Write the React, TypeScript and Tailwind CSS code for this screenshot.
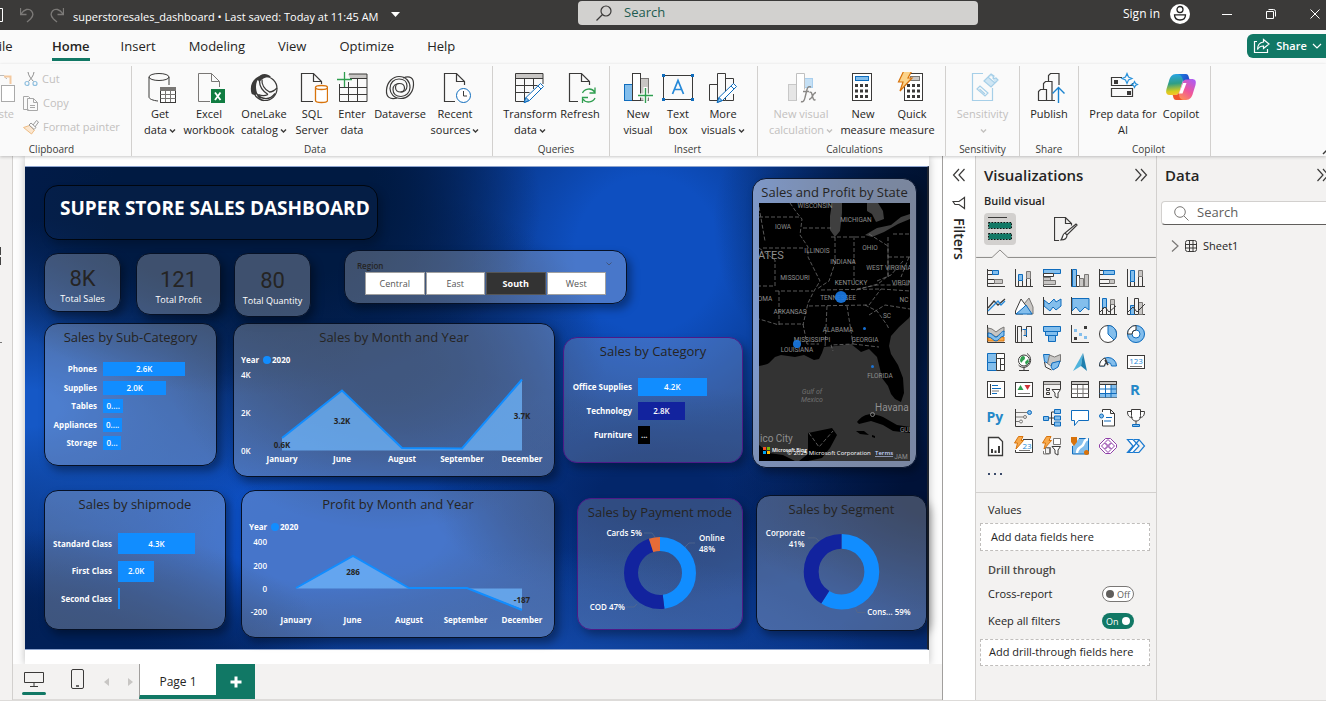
import React from "react";
import type { ReactNode } from "react";

const D = "#3b3a39";
const G = "#797775";
const LG = "#c8c6c4";
const B = "#0f6cbd";
const LB = "#83beec";
const GR = "#2f9e4f";
const OR = "#d8730b";

/* ---------- small helpers ---------- */

function Svg({ w, h, children, className = "" }: { w: number; h: number; children: ReactNode; className?: string }) {
  return (
    <svg width={w} height={h} viewBox={`0 0 ${w} ${h}`} fill="none" className={`shrink-0 ${className}`} aria-hidden="true">
      {children}
    </svg>
  );
}

function Chevron({ color = D }: { color?: string }) {
  return (
    <svg width="7" height="6" viewBox="0 0 7 6" fill="none" className="ml-0.5 inline-block" aria-hidden="true">
      <path d="M1 1.500 3.500 4 6 1.500" stroke={color} strokeWidth="1.400" />
    </svg>
  );
}

/* ---------- ribbon icons (32 x 32) ---------- */

const calcDots = [13, 18.500, 24].flatMap((y) => [8, 13, 18].map((x) => ({ x, y })));

function Pencil() {
  return (
    <g stroke={B}>
      <path d="m26.500 11.500 3 3-14 14-5 2 1.500-5z" fill="#fff" />
      <path d="m12 25.500 3 3-5 2z" fill={LB} />
      <path d="m24 14 3 3" />
    </g>
  );
}

const ribbonIcons: Record<string, ReactNode> = {
  getData: (
    <>
      <g stroke={D}>
        <ellipse cx="15" cy="5" rx="10" ry="3.500" />
        <path d="M5 5v20c0 2 4 3.500 9 4M25 5v8" />
        <rect x="16.500" y="15.500" width="15" height="15" fill="#fff" />
        <path d="M16.500 22.500h15M16.500 26.500h15M21.500 18v12M26.500 18v12" stroke={G} />
      </g>
      <path d="M16 15h16v4H16z" fill={G} />
    </>
  ),
  excel: (
    <>
      <path d="M17 29.500H5.500V1.500H18.500L26.500 9.500V15M18.500 1.500V9.500H26.500" stroke={G} />
      <rect x="18" y="17" width="14" height="14" fill="#107c41" />
      <path d="m22 20.500 5.500 7.500M27.500 20.500 22 28" stroke="#fff" strokeWidth="1.800" />
    </>
  ),
  oneLake: (
    <>
      <circle cx="17" cy="16.500" r="12" stroke={D} strokeWidth="1.200" />
      <path d="M10.500 4.500C4 8 1.500 14 3.500 21.500c2 2 4 1.500 6 .5C7 16 7.500 9 12 5z" fill={D} />
      <path d="M9 7C12 2 18 0 23 5c-4-.5-9 1-11.500 5z" fill={D} />
      <path d="M11.500 9c0 5 3 10 8.500 13.500M14 7.500c-.5 5 2.500 10 7.500 12.500 3 0 5.500-2 7.500-4M9 22c5 6 13 6.500 18-.5M9.500 23.500c1.500 2.500 3.500 4.500 6 5M20 22.500c-3 1.500-6.500 1.500-9.500 0" stroke={D} strokeWidth="1.300" />
    </>
  ),
  sql: (
    <>
      <path d="M17 29.500H5.500V1.500H17.500L25.500 9.500V12M17.500 1.500V9.500H25.500" stroke={D} strokeWidth="1.200" />
      <g stroke={OR} strokeWidth="1.300" fill="#fff">
        <path d="M19.500 15.500v13c0 1.200 3 2 6 2s6-.8 6-2v-13" />
        <ellipse cx="25.500" cy="15.500" rx="6" ry="2" />
      </g>
    </>
  ),
  enter: (
    <>
      <path d="M12 2h19v4H14z" fill={LG} />
      <path d="M3.500 12v17.500h27.500v-27.500H13M3.500 15.500h27.500M3.500 22.500h27.500M12.500 10v19M21.500 6v23M14 6.500h17" stroke={D} />
      <path d="M8.500 0v15M1 7.500h15" stroke={GR} strokeWidth="1.300" />
    </>
  ),
  dataverse: (
    <g stroke={D} strokeWidth="1.200">
      <path d="M13 26C6 28 2 25 2.500 18 3 10 9 4.500 15 4.500c7 0 11 5 11 11 0 5-4 9-9 9s-8-3-8-7c0-4 3-6 6.500-6 3 0 5 2 5 4.500s-2 4-4 4" />
      <path d="M19 6c7-3 11 0 10.500 7-.5 8-6 13.500-12.500 13.500-7 0-11-5-11-10 0-6 4-9.500 9-9.500s8 3 8 7c0 4-3 6-6.500 6-3 0-5-2-5-4.500s2-4 4-4" />
    </g>
  ),
  recent: (
    <>
      <path d="M16 29.500H5.500V1.500H17.500L25.500 9.500V13M17.500 1.500V9.500H25.500" stroke={D} strokeWidth="1.200" />
      <circle cx="24.500" cy="23.500" r="7" stroke={B} fill="#fff" />
      <path d="M24.500 19v5H28" stroke={D} />
    </>
  ),
  transform: (
    <>
      <path d="M2 2h27v4H2z" fill={LG} />
      <path d="M12 29.500H1.500V1.500h27.500V12M1.500 6.500h27.500M1.500 13.500h22M1.500 20.500h14M10.500 6v23M19.500 6v11" stroke={D} />
      <Pencil />
    </>
  ),
  refresh: (
    <>
      <path d="M14 29.500H5.500V1.500H17.500L25.500 9.500V13M17.500 1.500V9.500H25.500" stroke={D} strokeWidth="1.200" />
      <path d="M18.500 21c1.500-4 9-6 12-1M31 15.500V21h-5.500M31 26c-1.500 4-9 6-12 1M18.500 31v-5.500H24" stroke={GR} strokeWidth="1.300" />
    </>
  ),
  newVisual: (
    <>
      <rect x="2.500" y="12.500" width="8" height="16" fill={LB} stroke={B} />
      <rect x="18.500" y="6.500" width="8" height="22" fill={LG} stroke={G} />
      <rect x="10.500" y="1.500" width="8" height="27" fill="#fff" stroke={D} />
      <path d="M23.500 15v16M16 23.500h15" stroke="#fff" strokeWidth="4" />
      <path d="M23.500 16v15M16 23.500h15" stroke={GR} strokeWidth="1.400" />
    </>
  ),
  textBox: (
    <>
      <rect x="1.500" y="3.500" width="29" height="24" stroke={D} />
      <path d="M0 2h3v3H0zM29 2h3v3h-3zM0 26h3v3H0zM29 26h3v3h-3z" fill={B} />
      <path d="M10.500 22 16 8.500 21.500 22M12.500 17.500h7" stroke="#2488d8" strokeWidth="1.700" />
    </>
  ),
  moreVisuals: (
    <>
      <path d="M10.500 12.500h-8v16h8M10.500 28.500v-27h8v27zM18.500 6.500h8V12M18.500 28.500h8V22" stroke={D} />
      <Pencil />
    </>
  ),
  visualCalc: (
    <>
      <rect x="3.500" y="12.500" width="8" height="16" fill="#e6e6e6" stroke="#c8c8c8" />
      <rect x="19.500" y="6.500" width="8" height="9" fill="#c5e0f5" stroke="#a9cfee" />
      <path d="M11.500 28.500v-27h8v16" stroke="#c0c0c0" fill="#fff" />
      <path d="M16 29.500c2 1 3.500-1 4-4l2-8c.6-2.500 2-3.500 4-2.500M18 19.500h6M24.500 20.500c2-1 2 0 3 4s2 4 3 3M31 20.500c-3 0-4 7-7 7" stroke="#8a8886" strokeWidth="1.400" />
    </>
  ),
  newMeasure: (
    <>
      <rect x="5.500" y="1.500" width="19" height="27" stroke={D} fill="#fff" />
      <rect x="8.500" y="4.500" width="13" height="4" fill={LB} stroke={B} />
      {calcDots.map((p) => (
        <rect key={`${p.x}-${p.y}`} x={p.x} y={p.y - 1} width="3" height="3" fill={D} />
      ))}
    </>
  ),
  quickMeasure: (
    <>
      <rect x="8.500" y="1.500" width="18" height="27" stroke={D} fill="#fff" />
      <rect x="14.500" y="4.500" width="9" height="4" fill={LG} stroke={G} />
      {calcDots.map((p) => (
        <rect key={`${p.x}-${p.y}`} x={p.x + 3} y={p.y - 1} width="3" height="3" fill={D} />
      ))}
      <path d="M7.500-.5h8L12 6h4L4 19l3-9H2.500z" fill="#fbd38a" stroke={OR} strokeWidth="1.200" />
    </>
  ),
  sensitivity: (
    <g stroke="#a6cfe8" strokeWidth="1.200">
      <path d="M16 1.500H5.500v27h20V16" />
      <path d="m10 17 3-3 8 7-3 3zM12.500 17l5.500 5" />
      <path d="m17 9 4-4 7 6-4 4zM21 5l3-3 2 2M24 2l3 2-1 3M28 11l3-3-2-2-3 1" fill="#cfe6f4" />
    </g>
  ),
  publish: (
    <>
      <path d="M5.500 28.500v-9l2-2h6v11zM10.500 17v-5.500l2-2h6.500v19h-5.500M15.500 9V3.500l2-2h8.500V13M19 28.500h3" stroke={D} strokeWidth="1.200" />
      <path d="M25.500 31V16M19.500 21.500l6-6 6 6" stroke="#1a83cf" strokeWidth="1.400" />
    </>
  ),
  prep: (
    <>
      <path d="M15 5.500H4.500v8h21V11M4.500 16.500h21v8h-21z" stroke={D} strokeWidth="1.200" />
      <path d="M7 8h4v4H7zM20 19h4v4h-4z" fill={D} />
      <path d="M20 1.500 21.500 5l3.500 1.500L21.500 8 20 11.500 18.500 8 15 6.500 18.500 5zM27.500 9.500l1 2 2 1-2 1-1 2-1-2-2-1 2-1z" stroke="#2a93dc" strokeWidth="1.200" />
    </>
  ),
  copilot: (
    <>
      <defs>
        <linearGradient id="cpA" x1="4" y1="2" x2="6" y2="24" gradientUnits="userSpaceOnUse">
          <stop stopColor="#2aa6ea" />
          <stop offset=".45" stopColor="#2e9e86" />
          <stop offset=".8" stopColor="#d6cc1e" />
          <stop offset="1" stopColor="#ffc02e" />
        </linearGradient>
        <linearGradient id="cpB" x1="28" y1="8" x2="14" y2="28" gradientUnits="userSpaceOnUse">
          <stop stopColor="#b05cf0" />
          <stop offset=".5" stopColor="#f0569a" />
          <stop offset="1" stopColor="#ff9a4a" />
        </linearGradient>
        <linearGradient id="cpC" x1="12" y1="2" x2="24" y2="8" gradientUnits="userSpaceOnUse">
          <stop stopColor="#1b8be6" />
          <stop offset="1" stopColor="#2148c8" />
        </linearGradient>
      </defs>
      <path d="M20 2h-9C7 2 5 5 4 9L1.500 17c-1 4 0 6 4 6H10c3 0 4-2 5-5l3-10c1-4 1-5.500 2-6z" fill="url(#cpA)" />
      <path d="M12 28h9c4 0 6-3 7-7l2.500-8c1-4 0-6-4-6H22c-3 0-4 2-5 5l-3 10c-1 4-1 5.500-2 6z" fill="url(#cpB)" />
      <path d="M12 2h8c3 0 3.500 1.500 4 4l.5 1.500H22c-2.500 0-4 1.500-5 4L18 8c-1-4-3-6-6-6z" fill="url(#cpC)" />
      <path d="M20 28h-8c-3 0-3.500-1.500-4-4l-.3-1H10c3 0 4-2 5-5l-1 4c0 4 2 6 6 6z" fill="#f0542e" />
      <path d="M18 11h3.500l-4 10.500H14z" fill="#fff" />
    </>
  ),
};

interface RibbonItem {
  icon: string;
  lines: string[];
  width: string;
  chevron?: boolean;
  disabled?: boolean;
}
interface RibbonGroup {
  name: string;
  width: string;
  items: RibbonItem[];
}

const ribbonGroups: RibbonGroup[] = [
  {
    name: "Data",
    width: "w-[361px] pl-1.5",
    items: [
      { icon: "getData", lines: ["Get", "data"], width: "w-[44px]", chevron: true },
      { icon: "excel", lines: ["Excel", "workbook"], width: "w-[54px]" },
      { icon: "oneLake", lines: ["OneLake", "catalog"], width: "w-[56px]", chevron: true },
      { icon: "sql", lines: ["SQL", "Server"], width: "w-[40px]" },
      { icon: "enter", lines: ["Enter", "data"], width: "w-[40px]" },
      { icon: "dataverse", lines: ["Dataverse"], width: "w-[56px]" },
      { icon: "recent", lines: ["Recent", "sources"], width: "w-[54px]", chevron: true },
    ],
  },
  {
    name: "Queries",
    width: "w-[117px] pl-2.5",
    items: [
      { icon: "transform", lines: ["Transform", "data"], width: "w-[54px]", chevron: true },
      { icon: "refresh", lines: ["Refresh"], width: "w-[46px]" },
    ],
  },
  {
    name: "Insert",
    width: "w-[148px] pl-2",
    items: [
      { icon: "newVisual", lines: ["New", "visual"], width: "w-[40px]" },
      { icon: "textBox", lines: ["Text", "box"], width: "w-[40px]" },
      { icon: "moreVisuals", lines: ["More", "visuals"], width: "w-[50px]", chevron: true },
    ],
  },
  {
    name: "Calculations",
    width: "w-[188px] pl-1.5",
    items: [
      { icon: "visualCalc", lines: ["New visual", "calculation"], width: "w-[74px]", chevron: true, disabled: true },
      { icon: "newMeasure", lines: ["New", "measure"], width: "w-[50px]" },
      { icon: "quickMeasure", lines: ["Quick", "measure"], width: "w-[48px]" },
    ],
  },
  {
    name: "Sensitivity",
    width: "w-[74px]",
    items: [{ icon: "sensitivity", lines: ["Sensitivity", ""], width: "w-full", chevron: true, disabled: true }],
  },
  { name: "Share", width: "w-[59px]", items: [{ icon: "publish", lines: ["Publish"], width: "w-full" }] },
  {
    name: "Copilot",
    width: "w-[132px] pl-2",
    items: [
      { icon: "prep", lines: ["Prep data for", "AI"], width: "w-[72px]" },
      { icon: "copilot", lines: ["Copilot"], width: "w-[44px]" },
    ],
  },
];

function TitleBar() {
  return (
    <header className="flex h-[30px] items-center bg-[#3b3a39] text-[12px] text-white">
      <div className="flex w-[73px] shrink-0 items-center overflow-hidden">
        <Svg w={4} h={16}>
          <path d="M0 1.500h2.500v13H0" stroke="#fff" />
        </Svg>
        <button type="button" aria-label="Undo" className="ml-4">
          <Svg w={14} h={16}>
            <path d="M.5 1v6.500h6M1 7C4 2 9 1 11.500 4s1 6-1 8L7 15" stroke="#7c7a78" strokeWidth="1.300" />
          </Svg>
        </button>
        <button type="button" aria-label="Redo" className="ml-4">
          <Svg w={14} h={16}>
            <path d="M13.500 1v6.500h-6M13 7C10 2 5 1 2.500 4s-1 6 1 8L7 15" stroke="#7c7a78" strokeWidth="1.300" />
          </Svg>
        </button>
      </div>
      <button type="button" className="flex w-[505px] shrink-0 items-center gap-3 pt-1 text-[11px] whitespace-nowrap">
        <span>superstoresales_dashboard • Last saved: Today at 11:45 AM</span>
        <Svg w={9} h={8} className="mb-1">
          <path d="M0 1h9L4.500 6z" fill="#fff" />
        </Svg>
      </button>
      <label className="mt-px flex h-6 w-[400px] shrink items-center gap-3 self-start rounded-sm bg-[#d2d1cf] pl-4.5">
        <Svg w={16} h={16}>
          <circle cx="10" cy="6" r="5" stroke={D} strokeWidth="1.200" />
          <path d="m6.500 9.500-6 6" stroke={D} strokeWidth="1.200" />
        </Svg>
        <input
          type="search"
          aria-label="Search the application"
          placeholder="Search"
          className="w-full bg-transparent text-[13px] outline-none placeholder:text-[#1d5c50]"
        />
      </label>
      <div className="ml-auto flex h-7 shrink-0 items-center self-start">
        <button type="button" className="flex items-center gap-2.5">
          Sign in
          <Svg w={20} h={20}>
            <circle cx="10" cy="10" r="10" fill="#fff" />
            <circle cx="10" cy="5.500" r="3" stroke="#222" strokeWidth="1.300" />
            <path d="M4.500 10.800h11c0 3-2 5.200-5.500 5.200s-5.500-2.200-5.500-5.200z" stroke="#222" strokeWidth="1.300" />
          </Svg>
        </button>
        <button type="button" aria-label="Minimize" className="ml-8">
          <Svg w={10} h={10}>
            <path d="M0 5.500h10" stroke="#fff" />
          </Svg>
        </button>
        <button type="button" aria-label="Restore" className="ml-8.5">
          <Svg w={10} h={10}>
            <path d="M.5 2.500h7v7h-7zM2.500.5h5q2 0 2 2v5" stroke="#fff" />
          </Svg>
        </button>
        <button type="button" aria-label="Close" className="mr-1.5 ml-8.5">
          <Svg w={10} h={10}>
            <path d="m.5.5 9 9M9.500.5l-9 9" stroke="#fff" />
          </Svg>
        </button>
      </div>
    </header>
  );
}

function TabBar() {
  const tabs = ["Insert", "Modeling", "View", "Optimize", "Help"];
  return (
    <nav className="flex h-[34px] items-center bg-[#fafafa] text-[13px] text-[#252423]">
      <button type="button" className="-ml-2 w-[22px] shrink-0 text-left">
        File
      </button>
      <button type="button" aria-current="page" className="mt-0.5 ml-[38px] h-[29px] self-start border-b-3 border-[#117865] pt-1 font-semibold">
        Home
      </button>
      <div className="ml-[31px] flex gap-[33px]">
        {tabs.map((t) => (
          <button key={t} type="button">
            {t}
          </button>
        ))}
      </div>
      <button
        type="button"
        className="mt-1 ml-auto flex h-6 w-[79px] items-center justify-between self-start rounded-l-md bg-[#117865] pr-1 pl-1.5 text-[11px] font-semibold text-white"
      >
        <Svg w={18} h={16}>
          <path d="M4 3.500H1.500v11h13V11" stroke="#fff" strokeWidth="1.200" />
          <path d="M10.500 1.500 16 6l-5.500 4.500V8C8 8 6 8.500 4.500 11.500 4.500 7 7 4.500 10.500 4z" stroke="#fff" strokeWidth="1.200" />
        </Svg>
        Share
        <Svg w={10} h={6}>
          <path d="m1 1 4 4 4-4" stroke="#fff" strokeWidth="1.200" />
        </Svg>
      </button>
    </nav>
  );
}

function Clipboard() {
  return (
    <section aria-label="Clipboard" className="flex w-[132px] shrink-0 flex-col border-r border-[#d2d0ce]">
      <div className="flex h-[76px] shrink-0 text-[11px] leading-4 text-[#c2c0be]">
        <button type="button" className="-ml-5 flex w-[42px] shrink-0 flex-col items-end gap-0.5 pt-1.5">
          <Svg w={24} h={32} className="mr-1 self-end">
            <path d="M0 6.500h4l2-3h4l2 3h1" stroke="#bbb" />
            <path d="M10 4.500h6.500V12" stroke="#f3c9a0" strokeWidth="2" />
            <rect x="7.500" y="13.500" width="13" height="16" stroke="#aaa" fill="#fff" />
          </Svg>
          <span className="pr-2">Paste</span>
        </button>
        <div className="flex flex-col pt-px">
          <button type="button" className="flex h-6 items-center gap-1 pl-0.5">
            <Svg w={14} h={16}>
              <path d="M4 1c.5 4 3 6.500 5.500 9.500M10 1c-.5 4-3 6.500-5.500 9.500" stroke="#8f8f8f" />
              <circle cx="3" cy="12.500" r="2" stroke="#8fbfdf" strokeWidth="1.200" />
              <circle cx="11" cy="12.500" r="2" stroke="#8fbfdf" strokeWidth="1.200" />
            </Svg>
            Cut
          </button>
          <button type="button" className="flex h-6 items-center gap-1">
            <Svg w={17} h={16}>
              <path d="M6.500 14.500h-5V1.500h5l2 2M5.500 3.500h6l4 4v8h-10zM11.500 3.500v4h4M8 10.500h5M8 12.500h5" stroke="#a8a8a8" />
            </Svg>
            Copy
          </button>
          <button type="button" className="flex h-6 items-center gap-1 whitespace-nowrap">
            <Svg w={17} h={16}>
              <path d="m1.500 8.500 6-2 5 4.500-3 4z" fill="#fbe6cf" stroke="#eebd85" />
              <path d="m7 6 2-2 5 4.500-2 2zM11 6l3.500-4.500L16.500 3 13 8" stroke="#9a9a9a" />
            </Svg>
            Format painter
          </button>
        </div>
      </div>
      <div className="pr-7 text-center text-[10px] leading-[14px] text-[#3b3a39]">Clipboard</div>
    </section>
  );
}

function Ribbon() {
  return (
    <div className="relative z-10 flex h-[92px] bg-[#fafafa] pt-0.5 shadow-[0_1px_3px_rgba(0,0,0,0.22)]">
      <Clipboard />
      {ribbonGroups.map((g) => (
        <section key={g.name} aria-label={g.name} className={`flex shrink-0 flex-col border-r border-[#d2d0ce] ${g.width}`}>
          <div className="flex h-[76px] shrink-0 items-start">
            {g.items.map((it) => (
              <button
                key={it.icon}
                type="button"
                disabled={it.disabled}
                className={`flex shrink-0 flex-col items-center pt-1.5 text-[11px] leading-4 whitespace-nowrap ${it.width} ${
                  it.disabled ? "text-[#c2c0be]" : "text-[#252423]"
                }`}
              >
                <Svg w={32} h={32} className="mb-0.5">{ribbonIcons[it.icon]}</Svg>
                {it.lines.map((l, i) => (
                  <span key={i} className="block h-4">
                    {l}
                    {it.chevron && i === it.lines.length - 1 && <Chevron color={it.disabled ? "#c2c0be" : D} />}
                  </span>
                ))}
              </button>
            ))}
          </div>
          <div className="text-center text-[10px] leading-[14px] text-[#3b3a39]">{g.name}</div>
        </section>
      ))}
      <button type="button" aria-label="Collapse ribbon" className="ml-auto self-end">
        <Svg w={4} h={8}>
          <path d="m1 6 4-4" stroke={D} strokeWidth="1.500" />
        </Svg>
      </button>
    </div>
  );
}

/* ---------- report visuals ---------- */

function Card({ title, className, children }: { title?: string; className: string; children?: ReactNode }) {
  return (
    <section className={`flex min-w-0 flex-col overflow-hidden rounded-[14px] border ${className}`}>
      {title && (
        <h2 className="pt-1 text-center text-[13px] leading-[18px] font-medium whitespace-nowrap text-[#252423]">{title}</h2>
      )}
      {children}
    </section>
  );
}

const glass = "bg-[#e6e6e6]/27 border-[#061126] shadow-[4px_5px_8px_rgba(0,0,0,0.35)]";
const glassPurple = "bg-[#e6e6e6]/20 border-[#4d1a87] shadow-[4px_5px_8px_rgba(0,0,0,0.3)]";

interface Bar {
  label: string;
  text: string;
  share: number;
  color?: string;
}

function Bars({ rows, labelWidth, barHeight, className }: { rows: Bar[]; labelWidth: string; barHeight: string; className: string }) {
  return (
    <div className={`flex flex-col justify-between ${className}`}>
      {rows.map((r) => (
        <div key={r.label} className="flex items-center">
          <span className={`shrink-0 text-right text-[8px] leading-3 font-bold whitespace-nowrap text-white ${labelWidth}`}>{r.label}</span>
          <div className="ml-1.5 flex min-w-0 flex-1">
            <div
              className={`flex items-center justify-center overflow-hidden text-[8px] font-semibold text-white ${barHeight} ${r.color ?? "bg-[#118dff]"}`}
              style={{ width: `${r.share}%` }}
            >
              {r.text}
            </div>
          </div>
        </div>
      ))}
    </div>
  );
}

function Label({ x, y, children, anchor = "middle", dark = false, heavy = false }: { x: number; y: number; children: string; anchor?: "start" | "middle" | "end"; dark?: boolean; heavy?: boolean }) {
  return (
    <text x={x} y={y} textAnchor={anchor} fontSize="8" fontWeight={heavy ? 700 : 600} fill={dark ? "#252423" : "#fff"}>
      {children}
    </text>
  );
}

function SalesChart() {
  return (
    <svg viewBox="0 0 320 128" className="mt-px w-full" role="img" aria-label="Sales by month">
      <Label x={7} y={16} anchor="start" heavy>Year</Label>
      <circle cx="33" cy="13" r="4" fill="#118dff" />
      <Label x={38} y={16} anchor="start" heavy>2020</Label>
      <Label x={7} y={31} anchor="start">4K</Label>
      <Label x={7} y={69} anchor="start">2K</Label>
      <Label x={7} y={107} anchor="start">0K</Label>
      <path d="M48 91 108 43.500 168 101l60 .5L288 32.500V103.500H48z" fill="#6fb6fb" fillOpacity=".75" />
      <path d="M48 91 108 43.500 168 101l60 .5L288 32.500" fill="none" stroke="#118dff" strokeWidth="2" />
      <Label x={48} y={101} dark heavy>0.6K</Label>
      <Label x={108} y={77} dark heavy>3.2K</Label>
      <Label x={288} y={72} dark heavy>3.7K</Label>
      {["January", "June", "August", "September", "December"].map((m, i) => (
        <Label key={m} x={48 + i * 60} y={115} heavy>{m}</Label>
      ))}
    </svg>
  );
}

function ProfitChart() {
  return (
    <svg viewBox="0 0 312 122" className="mt-px w-full" role="img" aria-label="Profit by month">
      <Label x={7} y={16} anchor="start" heavy>Year</Label>
      <circle cx="33" cy="13" r="4" fill="#118dff" />
      <Label x={38} y={16} anchor="start" heavy>2020</Label>
      <Label x={25} y={31} anchor="end">400</Label>
      <Label x={25} y={55} anchor="end">200</Label>
      <Label x={25} y={78} anchor="end">0</Label>
      <Label x={25} y={101} anchor="end">-200</Label>
      <path d="M54 74.500 111 42l56 32h58l55 21V74.500z" fill="#6fb6fb" fillOpacity=".75" />
      <path d="M54 74 111 42l56 32h58l55 22" fill="none" stroke="#118dff" strokeWidth="2" />
      <Label x={111} y={61} dark heavy>286</Label>
      <Label x={280} y={89} dark heavy>-187</Label>
      {["January", "June", "August", "September", "December"].map((m, i) => (
        <Label key={m} x={54 + i * 56.500} y={109} heavy>{m}</Label>
      ))}
    </svg>
  );
}

function Arc({ cx, cy, r, w, from, to, color }: { cx: number; cy: number; r: number; w: number; from: number; to: number; color: string }) {
  return (
    <circle
      cx={cx}
      cy={cy}
      r={r}
      fill="none"
      stroke={color}
      strokeWidth={w}
      pathLength={100}
      strokeDasharray={`${to - from} ${100 - (to - from)}`}
      strokeDashoffset={-from}
      transform={`rotate(-90 ${cx} ${cy})`}
    />
  );
}

function PaymentDonut() {
  return (
    <svg viewBox="0 0 164 108" className="w-full" role="img" aria-label="Sales by payment mode">
      <Arc cx={82} cy={52} r={29} w={14} from={0} to={48} color="#118dff" />
      <Arc cx={82} cy={52} r={29} w={14} from={48} to={95} color="#12239e" />
      <Arc cx={82} cy={52} r={29} w={14} from={95} to={100} color="#e66c37" />
      <path d="M66 12h8l3 4M107 26l4-4h6M48 86h8l3-3" fill="none" stroke="#566a8c" strokeWidth=".7" />
      <Label x={64} y={15} anchor="end">Cards 5%</Label>
      <Label x={121} y={20} anchor="start">Online</Label>
      <Label x={121} y={31} anchor="start">48%</Label>
      <Label x={47} y={89} anchor="end">COD 47%</Label>
    </svg>
  );
}

function SegmentDonut() {
  return (
    <svg viewBox="0 0 170 112" className="w-full" role="img" aria-label="Sales by segment">
      <Arc cx={85} cy={54} r={30.500} w={15} from={0} to={59} color="#118dff" />
      <Arc cx={85} cy={54} r={30.500} w={15} from={59} to={100} color="#12239e" />
      <path d="M51 20h8l3 3M99 91l2 4h8" fill="none" stroke="#5d6b82" strokeWidth=".7" />
      <Label x={48} y={18} anchor="end">Corporate</Label>
      <Label x={48} y={29} anchor="end">41%</Label>
      <Label x={111} y={98} anchor="start">Cons... 59%</Label>
    </svg>
  );
}

const mapLabels: [number, number, string][] = [
  [56, 5, "WISCONSIN"],
  [24, 26, "IOWA"],
  [97, 19, "MICHIGAN"],
  [58, 50, "ILLINOIS"],
  [111, 47, "OHIO"],
  [84, 61, "INDIANA"],
  [130, 67, "WEST VIRGINIA"],
  [36, 77, "MISSOURI"],
  [92, 82, "KENTUCKY"],
  [143, 82, "VIRGIN"],
  [79, 97, "TENNESSEE"],
  [6, 98, "OMA"],
  [145, 99, "NC"],
  [31, 111, "ARKANSAS"],
  [128, 115, "SC"],
  [79, 129, "ALABAMA"],
  [53, 139, "MISSISSIPPI"],
  [106, 139, "GEORGIA"],
  [38, 149, "LOUISIANA"],
  [121, 175, "FLORIDA"],
  [147, 229, "GUL"],
  [142, 256, "JAM"],
];

function StateMap() {
  return (
    <svg viewBox="0 0 151 258" className="mx-auto w-[151px] bg-black" role="img" aria-label="Map of sales and profit by state">
      <path
        d="M0 163c4-1 7-1 10-3l6-6 6-2 14 2 9-2 10 5 5-1 3-6 2-6 12-1 15-2 10 8 8-3 8 8 3 12 2 9 6 8 3 8 4 5 6 3 3-9-1-15-5-13-7-11-2-8 2-10 8-9 10-9 4-7 7-2V258H0z"
        fill="#333"
      />
      <path d="M98 219c6-8 14-10 26-5l14 8 13 2v6l-17-2-10-6-12-4-12 3zM49 230l24-5 5 7-7 13-8 10-14 3H40l9-7zM0 242l10 8 14 2 12 6H0zM97 228l8 0 5 4-9-1zM113 232l3 1v2l-3-1z" fill="#000" />
      <path d="M73 0h10l0 10-2 18-5 6-5-7 0-14zM108 0h11l5 8 1 8-8 3-4-8-5-3zM106 32l12-7 14-3 10-8 9-3v5l-12 5-14 8-12 5z" fill="#3f3f3f" />
      <path
        d="M31 0l7 10 5 6-2 16 8 12 0 10 6 12 6 12-6 10-6 12-5 22M0 14h42M44 25h28M4 45h40M0 45l16 12v26H0M16 88h38M95 33v44M129 34v40M76 34v26l-6 18-12 8M72 34h36M129 54h22M110 31l19 12 0 30-10 8-22 6M62 87l60-1 29 2M50 103l60-1 12-16M68 103l-2 42M88 103l6 38-22 1 2 6M106 102l12 6 10 14 2 4M94 141l26 3M20 121h24l4 20h12M20 88v34l-20-6M0 4l6 34M118 78l14-6 12-14M98 86l20-4 33 0M110 112l16-10 25 4M134 31h17M150 54l-8 20M50 230l10 14 14-16"
        fill="none"
        stroke="#6f6f6f"
        strokeWidth=".8"
        strokeDasharray="4 2"
      />
      {mapLabels.map(([x, y, t]) => (
        <text key={t} x={x} y={y} textAnchor="middle" fontSize="6.500" fill="#8f8f8f" fontFamily="Roboto, sans-serif">
          {t}
        </text>
      ))}
      <g fill="#8f8f8f" fontFamily="Roboto, sans-serif">
        <text x="-1" y="56" fontSize="11">ATES</text>
        <text x="116" y="208" fontSize="10">Havana</text>
        <text x="1" y="239" fontSize="10">ico City</text>
        <text x="53" y="191" fontSize="7" fontStyle="italic" textAnchor="middle" fill="#707070">Gulf of</text>
        <text x="53" y="199" fontSize="7" fontStyle="italic" textAnchor="middle" fill="#707070">Mexico</text>
      </g>
      <circle cx="113.500" cy="211.500" r="2" fill="none" stroke="#999" strokeWidth=".8" />
      <g fill="#1a7ae6" fillOpacity=".9">
        <circle cx="82" cy="94" r="6" />
        <circle cx="38" cy="141" r="4" />
        <circle cx="105.500" cy="125.500" r="1.500" />
        <circle cx="113.500" cy="163.500" r="1.500" />
      </g>
      <path d="M4 244h3v3H4z" fill="#f25022" />
      <path d="M8 244h3v3H8z" fill="#7fba00" />
      <path d="M4 248h3v3H4z" fill="#00a4ef" />
      <path d="M8 248h3v3H8z" fill="#ffb900" />
      <g fill="#fff" fontSize="6" fontWeight="600">
        <text x="13" y="249" fontSize="5">Microsoft Bing</text>
        <text x="28" y="252" fontSize="6" fontWeight="500">© 2025 Microsoft Corporation</text>
        <text x="116" y="252" fill="#c4d3ff" textDecoration="underline">Terms</text>
      </g>
    </svg>
  );
}

function Kpi({ value, label, className }: { value: string; label: string; className: string }) {
  return (
    <Card className={`items-center justify-center pt-2 ${glass} ${className}`}>
      <span className="text-[22px] leading-6 text-[#252423] [font-family:Roboto,sans-serif]">{value}</span>
      <span className="text-[9px] leading-4 font-medium whitespace-nowrap text-white">{label}</span>
    </Card>
  );
}

function Slicer() {
  return (
    <section aria-label="Region" className={`ml-5 flex h-[54px] min-w-0 flex-col rounded-[14px] border pr-5 pl-3 ${glass}`}>
      <div className="flex h-[21px] items-center justify-between pt-2 text-[8px] font-semibold text-[#252423]">
        Region
        <Svg w={6} h={4} className="-mr-1.5 mb-1">
          <path d="m.5.5 2.500 2.500L5.500.5" stroke="#41557c" />
        </Svg>
      </div>
      <div className="ml-2 grid h-[23px] grid-cols-4 gap-px text-[9px]">
        {["Central", "East", "South", "West"].map((r) => (
          <button
            key={r}
            type="button"
            aria-pressed={r === "South"}
            className={
              r === "South"
                ? "border border-[#555] bg-[#333] font-bold text-white"
                : "border border-[#a0a0a0] bg-white text-[#555]"
            }
          >
            {r}
          </button>
        ))}
      </div>
    </section>
  );
}

function Report() {
  return (
    <div className="flex flex-col border-y border-r-2 border-y-[#8fa5cf] border-r-[#1e2430] bg-[#021c4e] bg-[radial-gradient(ellipse_250px_200px_at_104%_12%,#00112e_20%,transparent),radial-gradient(ellipse_220px_120px_at_102%_68%,#001238_20%,transparent),radial-gradient(ellipse_300px_190px_at_24%_8%,#001a42_45%,transparent),radial-gradient(ellipse_220px_170px_at_40%_40%,#04235a_10%,transparent),radial-gradient(ellipse_260px_140px_at_6%_104%,#012058_25%,transparent),radial-gradient(ellipse_330px_130px_at_58%_106%,#1248a8_20%,transparent),radial-gradient(ellipse_230px_110px_at_70%_68%,#03266a_25%,transparent),radial-gradient(ellipse_290px_310px_at_69%_18%,#0e4fc0_25%,transparent),radial-gradient(ellipse_340px_190px_at_0%_50%,#1558c6_10%,transparent),radial-gradient(ellipse_380px_170px_at_34%_76%,#0b4cc0_30%,transparent),radial-gradient(ellipse_300px_200px_at_85%_90%,#083384_20%,transparent)] pt-[11px] pb-[11px] pl-[19px]">
      <div className="grid grid-cols-[minmax(0,699fr)_minmax(0,165fr)] items-start gap-[9px] pr-2.5">
        <div className="flex flex-col pt-[7px]">
          <div className="grid grid-cols-[minmax(0,334fr)_minmax(0,365fr)]">
            <Card className="h-[55px] border-[#00060f] bg-white/2 pl-[15px] shadow-[4px_5px_8px_rgba(0,0,0,0.2)]">
              <h1 className="pt-2.5 text-[19px] leading-6 font-bold whitespace-nowrap text-white">SUPER STORE SALES DASHBOARD</h1>
            </Card>
          </div>
          <div className="mt-2.5 grid h-[67px] grid-cols-[minmax(0,77fr)_minmax(0,87fr)_minmax(0,77fr)_minmax(0,303fr)_minmax(0,103fr)] items-start gap-[13px]">
            <Kpi value="8K" label="Total Sales" className="mt-[3px] h-[59px]" />
            <Kpi value="121" label="Total Profit" className="mt-[3px] ml-0.5 h-[62px]" />
            <Kpi value="80" label="Total Quantity" className="mt-[3px] h-[64px]" />
            <Slicer />
          </div>
          <div className="mt-1.5 grid grid-cols-[minmax(0,173fr)_minmax(0,330fr)_minmax(0,180fr)] items-start gap-2">
            <Card title="Sales by Sub-Category" className={`h-[143px] ${glass}`}>
              <Bars
                className="mt-4 h-[88px]"
                labelWidth="w-[52px]"
                barHeight="h-3.5"
                rows={[
                  { label: "Phones", text: "2.6K", share: 73 },
                  { label: "Supplies", text: "2.0K", share: 56 },
                  { label: "Tables", text: "0....", share: 18 },
                  { label: "Appliances", text: "0....", share: 17 },
                  { label: "Storage", text: "0...", share: 16 },
                ]}
              />
            </Card>
            <Card title="Sales by Month and Year" className={`ml-2 h-[154px] ${glass}`}>
              <SalesChart />
            </Card>
            <Card title="Sales by Category" className={`mt-3.5 h-[126px] ${glassPurple}`}>
              <Bars
                className="mt-[18px] h-[66px]"
                labelWidth="w-[68px]"
                barHeight="h-[18px]"
                rows={[
                  { label: "Office Supplies", text: "4.2K", share: 66 },
                  { label: "Technology", text: "2.8K", share: 45, color: "bg-[#12239e]" },
                  { label: "Furniture", text: "...", share: 12, color: "bg-black" },
                ]}
              />
            </Card>
          </div>
        </div>
        <Card
          title="Sales and Profit by State"
          className="h-[290px] border-[#0b1730] bg-[#dfe6f5]/55 shadow-[4px_5px_8px_rgba(0,0,0,0.35)]"
        >
          <div className="mt-0.5 flex">
            <StateMap />
          </div>
        </Card>
      </div>
      <div className="mt-[13px] grid grid-cols-[minmax(0,182fr)_minmax(0,316fr)_minmax(0,175fr)_minmax(0,171fr)] items-start gap-[13px]">
        <Card title="Sales by shipmode" className={`h-[140px] ${glass}`}>
          <Bars
            className="mt-5 h-[76px]"
            labelWidth="w-[67px]"
            barHeight="h-[21px]"
            rows={[
              { label: "Standard Class", text: "4.3K", share: 72 },
              { label: "First Class", text: "2.0K", share: 34 },
              { label: "Second Class", text: "", share: 2 },
            ]}
          />
        </Card>
        <Card title="Profit by Month and Year" className={`ml-0.5 h-[148px] ${glass}`}>
          <ProfitChart />
        </Card>
        <Card title="Sales by Payment mode" className={`mt-2 ml-[9px] h-[132px] ${glassPurple}`}>
          <PaymentDonut />
        </Card>
        <Card title="Sales by Segment" className={`mt-[5px] h-[136px] ${glass}`}>
          <SegmentDonut />
        </Card>
      </div>
    </div>
  );
}

function PageTabs() {
  return (
    <footer className="flex h-[36px] items-stretch border-b border-[#dddbd9] bg-[#f3f2f1]">
      <button type="button" aria-label="Desktop layout" className="ml-[9px] flex w-6 flex-col items-center justify-between pt-2 pb-1">
        <Svg w={20} h={15}>
          <path d="M.5.5h19v10H.5zM10 11v3M6 14.500h8" stroke={D} />
        </Svg>
        <span className="h-[3px] w-full rounded bg-[#117865]" />
      </button>
      <button type="button" aria-label="Mobile layout" className="ml-[22px] flex w-5 items-start justify-center pt-[5px]">
        <Svg w={14} h={20}>
          <rect x=".5" y=".5" width="12" height="19" rx="1.500" stroke={D} />
          <path d="M5 17h3" stroke={D} strokeWidth="1.500" />
        </Svg>
      </button>
      <div className="mr-1.5 ml-4 flex w-[29px] items-center justify-between">
        <Svg w={5} h={8}>
          <path d="M5 0v8L0 4z" fill={LG} />
        </Svg>
        <Svg w={5} h={8}>
          <path d="M0 0v8l5-4z" fill={LG} />
        </Svg>
      </div>
      <button type="button" className="w-[77px] border-b-4 border-l border-b-[#117865] border-l-[#a19f9d] bg-white pt-1 text-[12px] text-[#252423]">
        Page 1
      </button>
      <button type="button" aria-label="New page" className="flex w-[39px] items-center justify-center bg-[#117865]">
        <Svg w={12} h={12}>
          <path d="M6 .5v11M.5 6h11" stroke="#fff" strokeWidth="3" />
        </Svg>
      </button>
    </footer>
  );
}

/* ---------- visual gallery icons (18 x 18) ---------- */

const axis = <path d="M.5 0v17.500H18" stroke={D} />;
const bolt = <path d="M3.500-.5H8L6 3.500h2.500L1 12l1.500-6H-.5z" fill="#f7a94b" stroke={OR} />;

const gallery: [string, ReactNode][] = [
  ["Stacked bar chart", <>{axis}<path d="M.5 1.500h5v4h-5M.5 10.500h7v4h-7" stroke={D} /><path d="M5.500 1.500h6v4h-6z" fill={LB} stroke={B} /><path d="M7.500 10.500h8v4h-8z" fill={LG} stroke={G} /></>],
  ["Stacked column chart", <>{axis}<path d="M3.500 11.500v6M7.500 11.500v6M11.500 9.500v8M15.500 9.500v8" stroke={D} /><path d="M3.500 5.500h4v6h-4z" fill={LB} stroke={B} /><path d="M11.500 2.500h4v7h-4z" fill={LG} stroke={G} /></>],
  ["Clustered bar chart", <>{axis}<path d="M.5.500h17v4H.5z" fill={LB} stroke={B} /><path d="M.5 4.500h10v3H.5z" fill="#fff" stroke={D} /><path d="M.5 8.500h7v3H.5zM.5 11.500h12v4H.5z" fill={LG} stroke={G} /></>],
  ["Clustered column chart", <>{axis}<path d="M1.500.500h4v17h-4z" fill={LB} stroke={B} /><path d="M5.500 6.500h3v11h-3z" fill="#fff" stroke={D} /><path d="M8.500 9.500h4v8h-4zM13.500 5.500h4v12h-4z" fill={LG} stroke={G} /></>],
  ["100% stacked bar chart", <>{axis}<path d="M.5 1.500h5v4h-5M.5 10.500h10v4H.5" stroke={D} /><path d="M4.500 1.500h11v4h-11z" fill={LB} stroke={B} /><path d="M10.500 10.500h5v4h-5z" fill={LG} stroke={G} /></>],
  ["100% stacked column chart", <>{axis}<path d="M3.500 12.500v5M7.500 12.500v5M11.500 7.500v10M15.500 7.500v10" stroke={D} /><path d="M3.500 1.500h4v11h-4z" fill={LB} stroke={B} /><path d="M11.500 1.500h4v6h-4z" fill={LG} stroke={G} /></>],
  ["Line chart", <>{axis}<path d="m1 11 6-7 4 4 7-6" stroke={D} strokeWidth="1.300" /><path d="m1 14 5-5 5-5 3 4 4-4" stroke="#2488d8" strokeWidth="1.300" /></>],
  ["Area chart", <><path d="M9 7 14 1l4 9v7h-6z" fill={LG} stroke={G} /><path d="M.5 14 6 2l6 8-4 7H.5z" fill="#fff" stroke={D} /><path d="m1 17 7-6 3-3 6 9z" fill={LB} stroke={B} /></>],
  ["Stacked area chart", <><path d="M1 3l5 4 5-5 2 3 5-3v7l-5 4-3-3-3 4-6-5z" fill={LB} stroke={B} />{axis}</>],
  ["100% stacked area chart", <><path d="M1 1.500h17V13l-4-3-5 5-4-5-4 4z" fill={LB} stroke={B} />{axis}</>],
  ["Line and stacked column chart", <>{axis}<path d="M3.500 1.500h4v9h-4z" fill={LB} stroke={B} /><path d="M11.500 2.500h4v5h-4z" fill={LG} stroke={G} /><path d="M3.500 10.500v7M7.500 10.500v7M11.500 7.500v10M15.500 7.500v10M1 15l5-5 4 5 7-6" stroke={D} /></>],
  ["Line and clustered column chart", <>{axis}<path d="M3.500 8.500h4v9h-4z" fill={LB} stroke={B} /><path d="M11.500 5.500h4v12h-4z" fill={LG} stroke={G} /><path d="M7.500 17V1.500h4V17M1 15l5-5 4 5 8-8" stroke={D} /></>],
  ["Ribbon chart", <>{axis}<path d="M1 3l4 1 4 3 4-3 4-2v5l-4 2-4 3-4-3-4-1z" fill={LG} stroke={G} /><path d="M1 12h4l4 2 4-2h4v4H1z" fill="#f7a94b" stroke={OR} /><path d="M1 8c5 0 5 4 8 4s4-5 8-6v5c-4 0-5 5-8 5s-4-4-8-4z" fill={LB} stroke={B} /></>],
  ["Waterfall chart", <>{axis}<path d="M2.500 17V1.500h4V17M11.500 12V1.500h5V17" stroke={D} /><path d="M6.500 17V6.500M10 4.500v6" stroke={G} /><path d="M7.500 4.500h4v6h-3" stroke={B} /></>],
  ["Funnel", <><path d="M.5 1.500h17v5H.5z" fill={LB} stroke={B} /><path d="M2.500 6.500h12v4h-12z" fill={LB} stroke={B} /><path d="M5.500 10.500h7v6h-7z" fill={LB} stroke={B} /></>],
  ["Scatter chart", <>{axis}<path d="M3 4h3v3H3zM8 8h3v3H8zM13 11h3v3h-3z" fill="#83beec" /><path d="M13 1h3v3h-3zM3 12h3v3H3z" fill={D} /></>],
  ["Pie chart", <><circle cx="9" cy="9" r="8.500" fill="#fff" stroke={D} /><path d="M9 .5a8.500 8.500 0 0 1 6 14.500L9 9z" fill={LB} stroke={B} /></>],
  ["Donut chart", <><circle cx="9" cy="9" r="6.200" stroke={LB} strokeWidth="5" /><circle cx="9" cy="9" r="8.500" stroke={B} /><circle cx="9" cy="9" r="4" stroke={B} fill="#fff" /><path d="M.5 9A8.500 8.500 0 0 1 9 .5V5a4 4 0 0 0-4 4z" fill="#fff" stroke={D} /></>],
  ["Treemap", <><path d="M.5.500h9v9h-9zM.5 9.500h9v8h-9z" fill={LB} stroke={B} /><path d="M9.500.500h8v5h-8zM9.500 5.500h4v12h-4zM13.500 5.500h4v6h-4zM13.500 11.500h4v6h-4z" fill="#fff" stroke={D} /></>],
  ["Map", <><circle cx="9" cy="7.500" r="5.500" fill="#fff" stroke={D} /><path d="M6 4c2-2 4-1 4 1s-2 2-3 4-2-1-2-2zM10 9l3-3 1 3-3 3z" fill={GR} /><path d="M12 .5c5 3 5 11-1 13.500-3 1-6 0-7.500-2M9 14v3M4 17.500h10" stroke={D} /></>],
  ["Filled map", <><path d="M.5 1.500h6l1 4-2 5-4-2z" fill={LB} stroke={B} /><path d="m6.500 2 5 2 6-2.500v7l-6 1-4 3-3-2z" fill={LG} stroke={G} /><path d="m9 10 8-2-2 6-5 3-2-3z" fill={LB} stroke={B} /><path d="m1.500 9 1 5 6 3" stroke={D} /></>],
  ["Azure map", <><path d="M12 0 2 18l8-5z" fill="#4fb3dc" /><path d="m12 0 4 18-6-5z" fill="#1f7fae" /></>],
  ["Gauge", <><path d="M.5 13a8.500 8.500 0 0 1 17 0h-5a3.500 3.500 0 0 0-7 0z" fill={LB} stroke={B} /><path d="M.5 13A8.500 8.500 0 0 1 6 5l2 4a4 4 0 0 0-2.500 4z" fill="#fff" stroke={D} /><path d="M9 12 6 7" stroke={D} strokeWidth="1.500" /></>],
  ["Card", <><rect x=".5" y="2.500" width="17" height="13" fill="#fff" stroke={D} /><text x="9" y="11" fontSize="8" textAnchor="middle" fill="#2488d8">123</text><path d="M3 13.500h12" stroke={G} /></>],
  ["Multi-row card", <><rect x=".5" y=".5" width="17" height="16" fill="#fff" stroke={D} /><path d="M3.500 3v11" stroke={D} /><path d="M5 4.500h6M5 7.500h9M5 12.500h5" stroke={B} /><path d="M5 10h7" stroke={G} /></>],
  ["KPI", <><rect x=".5" y="1.500" width="17" height="14" fill="#fff" stroke={D} /><path d="m5.500 4 3 5h-6z" fill={GR} /><path d="M9.500 4h6l-3 5z" fill="#d13438" /><path d="M3 12.500h12" stroke={G} /></>],
  ["Slicer", <><path d="M.5.500h17v3H.5z" fill={LG} stroke={G} /><path d="M9 16.500H.5V.500h17V8M3.500 7.500h3v2h-3zM3.500 11.500h3v2h-3z" stroke={D} /><path d="M9 8.500h8.500L15 12v5l-3-1.500V12z" fill="#fff" stroke={D} /></>],
  ["Table", <><rect x=".5" y=".5" width="17" height="16" fill="#fff" stroke={D} /><path d="M.5.500h17v3H.5z" fill={LG} stroke={D} /><path d="M.5 8h17M.5 12.500h17M6.500 4v12.500M12 4v12.500" stroke={G} /></>],
  ["Matrix", <><rect x=".5" y=".5" width="17" height="16" fill="#fff" stroke={D} /><path d="M1 12.500h17v4H1zM12 3.500h5.500V12H12z" fill={LB} /><path d="M.5.500h17v3H.5z" fill={LG} stroke={D} /><path d="M.5 8h17M.5 12.500h17M6.500 4v12.500M12 4v12.500" stroke={B} /></>],
  ["R script visual", <text x="3" y="14" fontSize="15" fontWeight="700" fill="#2488c8">R</text>],
  ["Python visual", <text x="-.5" y="13" fontSize="14" fontWeight="700" fill="#2488c8">Py</text>],
  ["Key influencers", <>{axis}<path d="M1 3.500h11M1 8h7M1 12.500h3" stroke={G} /><circle cx="14.500" cy="3.500" r="2" fill={LB} stroke={B} /><circle cx="10" cy="8" r="1.500" stroke={G} /><circle cx="6" cy="12.500" r="1.500" stroke={G} /></>],
  ["Decomposition tree", <><path d="M6 9h5M8.500 3v12.500M8.500 3h3M8.500 15.500h3" stroke={D} /><path d="M.5 7.500h5v4h-5zM11.500.500h6v4h-6zM11.500 7h6v4h-6zM11.500 13h6v4h-6z" fill={LB} stroke={B} /></>],
  ["Q&A", <path d="M.5 1.500h17v10h-10l-4 5v-5h-3z" fill="#fff" stroke={B} />],
  ["Smart narrative", <><path d="M3.500 3V.500h8l4 4v12.500h-12v-6M11.500.500v4h4" fill="#fff" stroke={D} /><circle cx="2.500" cy="7" r="2" fill={LB} stroke={B} /><path d="M7 8.500h6M5 12h7" stroke={B} /></>],
  ["Goals", <><path d="M4.500.500h9v6c0 4-2 5.500-4.500 5.500S4.500 10.500 4.500 6.500zM4.500 2.500h-4c0 4 1.500 6 5 6M13.500 2.500h4c0 4-1.500 6-5 6M9 12v3" fill="#fff" stroke={D} /><path d="M5.500 15.500h7v2h-7z" fill={LB} stroke={B} /></>],
  ["Paginated report", <><path d="M1.500.500h10l4 4v14h-14z" fill="#fff" stroke={D} strokeWidth="1.300" /><path d="M4 12h2v4H4zM7.500 13.500h2V16h-2zM11 9h2v7h-2z" fill={D} /></>],
  ["Card (new)", <><path d="M8 2.500h9.500v13H.5V13" fill="#fff" stroke={D} /><text x="12" y="12" fontSize="8" textAnchor="middle" fill="#2488d8">23</text><path d="M4 13.500h11" stroke={G} />{bolt}</>],
  ["Slicer (new)", <><path d="M10.500 1.500h7v6h-7zM.5 14v3h6v-6h-3M2.500 10.500h5v6h-5z" fill="#fff" stroke={G} />{bolt}<path d="M9 9.500h8.500L15 13v5l-3-1.500V13z" fill="#fff" stroke={D} /></>],
  ["ArcGIS maps", <><path d="M8 1.500h9.500V17H1.500V9" fill={LB} stroke={B} /><path d="M17 2c-5 1-3 5-6 7s-5 3-5 7" stroke="#fff" strokeWidth="2.500" /><path d="M0 0h6v5L3 9 0 5z" fill={OR} /><circle cx="15.500" cy="15.500" r="2.500" fill={OR} /></>],
  ["Power Apps", <g stroke="#8f3fa8" fill="#fff"><path d="M6.500 1.500h5l6 6v3l-6 6h-5l-6-6v-3z" /><path d="m9 2.500 3 3-3 3-3-3zM5.500 6l3 3-3 3-3-3zM12.500 6l3 3-3 3-3-3zM9 9.500l3 3-3 3-3-3z" /></g>],
  ["Power Automate", <g stroke="#1a7ad0" strokeWidth="1.200" fill="#fff"><path d="M.5 2.500H6l6 6.500-6 6.500H.5L6 9z" /><path d="M7 2.500h5L17.500 9 12 15.500H6.500" fill="none" /><path d="M2 15 12 3" /></g>],
];

function Collapse({ flip = false }: { flip?: boolean }) {
  return (
    <Svg w={14} h={14} className={flip ? "rotate-180" : ""}>
      <path d="m1.500 1 5.500 6-5.500 6M7 1l5.500 6L7 13" stroke={D} strokeWidth="1.200" />
    </Svg>
  );
}

function FiltersPane() {
  return (
    <aside className="flex w-[33px] shrink-0 flex-col items-center border-l border-[#a19f9d] bg-white pt-3">
      <button type="button" aria-label="Expand filters">
        <Collapse flip />
      </button>
      <Svg w={14} h={14} className="mt-3.5 rotate-90">
        <path d="M1.500 1.500h11L8.500 7v4l-3 2V7z" stroke={D} strokeWidth="1.200" />
      </Svg>
      <span className="mt-2 text-[14px] font-semibold text-[#252423] [writing-mode:vertical-rl]">Filters</span>
    </aside>
  );
}

function Toggle({ label, on }: { label: string; on: boolean }) {
  return (
    <label className="flex h-[27px] items-center justify-between pr-[22px] pl-3">
      {label}
      <input type="checkbox" role="switch" defaultChecked={on} className="peer sr-only" />
      {on ? (
        <span className="flex h-4 w-8 items-center justify-between rounded-full bg-[#117865] px-1 text-[9px] text-white">
          On
          <span className="size-2 rounded-full bg-white" />
        </span>
      ) : (
        <span className="flex h-4 w-8 items-center justify-between rounded-full border border-[#797775] bg-white px-[3px] text-[9px] text-[#605e5c]">
          <span className="size-2 rounded-full bg-[#605e5c]" />
          Off
        </span>
      )}
    </label>
  );
}

function VisualizationsPane() {
  return (
    <aside className="flex w-[181px] shrink-0 flex-col border-l border-[#d2d0ce] bg-[#f3f2f1] text-[11px] text-[#252423]">
      <div className="flex items-center justify-between pt-[9px] pr-2 pl-2">
        <h2 className="text-[15px] leading-5 font-semibold">Visualizations</h2>
        <button type="button" aria-label="Collapse visualizations">
          <Collapse />
        </button>
      </div>
      <h3 className="mt-2 pl-2 leading-4 font-semibold">Build visual</h3>
      <div className="mt-1 flex gap-[34px] pl-2">
        <button type="button" aria-label="Build visual" className="flex size-8 items-center justify-center rounded-sm bg-[#d2d0ce]">
          <Svg w={24} h={26}>
            <path d="M0 1.500h19" stroke={D} />
            <path d="M.5 6.500h23v6H.5zM.5 17.500h23v6H.5z" fill="#117865" stroke="#111" strokeDasharray="1.500 1.500" />
          </Svg>
        </button>
        <button type="button" aria-label="Format visual" className="flex size-8 items-center justify-center">
          <Svg w={24} h={26}>
            <path d="M5 24.500H.5V1.500h11l6 6v2M11.500 1.500v6h6" stroke={D} strokeWidth="1.200" />
            <path d="M23 9 13 19l-2-2L22 8zM13 19c0 3-2 5-6 5 2-2 1-6 4-7z" fill="#fff" stroke={D} strokeWidth="1.200" />
          </Svg>
        </button>
      </div>
      <svg viewBox="0 0 181 9" className="mt-1 w-full" fill="none" aria-hidden="true">
        <path d="M0 8.500h16L24 1l8 7.500h149" stroke="#8a8886" />
      </svg>
      <div className="mt-[9px] grid w-[174px] grid-cols-6 pl-1.5">
        {gallery.map(([name, icon]) => (
          <button key={name} type="button" aria-label={name} title={name} className="flex h-7 w-7 items-start justify-center pt-0.5">
            <svg width="18" height="18" viewBox="0 0 18 18" fill="none" className="overflow-visible" aria-hidden="true">
              {icon}
            </svg>
          </button>
        ))}
      </div>
      <button type="button" aria-label="More visuals" className="ml-3 flex h-6 w-4 items-center">
        <Svg w={16} h={3}>
          <path d="M0 0h2v2H0zM6 0h2v2H6zM12 0h2v2h-2z" fill="#3a4a6a" />
        </Svg>
      </button>
      <div className="mt-[5px] border-t border-[#d2d0ce] pt-2">
        <div className="pl-3 leading-[18px]">Values</div>
        <div className="mt-1 mr-1.5 ml-1 flex h-7 items-center border border-dashed border-[#c0bebc] bg-white pl-2.5">
          Add data fields here
        </div>
        <h3 className="mt-2.5 pl-3 leading-[18px] font-semibold text-[#4a4846]">Drill through</h3>
        <div className="mt-0.5">
          <Toggle label="Cross-report" on={false} />
          <Toggle label="Keep all filters" on />
        </div>
        <div className="mt-1 mr-1.5 ml-1 flex h-[27px] items-center border border-dashed border-[#c0bebc] bg-white pl-2 whitespace-nowrap">
          Add drill-through fields here
        </div>
      </div>
    </aside>
  );
}

function DataPane() {
  return (
    <aside className="flex w-[170px] shrink-0 flex-col overflow-hidden border-l border-[#d2d0ce] bg-[#f3f2f1] text-[11px] text-[#252423]">
      <div className="-mr-1 flex items-center justify-between pt-[9px] pl-2">
        <h2 className="text-[15px] leading-5 font-semibold">Data</h2>
        <button type="button" aria-label="Collapse data">
          <Collapse />
        </button>
      </div>
      <label className="mt-4 -mr-1 ml-1 flex h-6 items-center gap-2 rounded-sm border border-[#d2d0ce] border-b-[#605e5c] bg-white pl-3">
        <Svg w={15} h={15}>
          <circle cx="6" cy="6" r="5.300" stroke={G} />
          <path d="m10 10 4.500 4.500" stroke={G} />
        </Svg>
        <input type="search" aria-label="Search fields" placeholder="Search" className="w-full bg-transparent text-[13px] outline-none placeholder:text-[#605e5c]" />
      </label>
      <button type="button" className="mt-[11px] ml-3.5 flex h-5 items-center gap-1.5">
        <Svg w={8} h={14}>
          <path d="m1 1.500 6 5.500-6 5.500" stroke={G} strokeWidth="1.200" />
        </Svg>
        <Svg w={12} h={12}>
          <rect x=".5" y=".5" width="11" height="11" rx="2" stroke={D} />
          <path d="M4.500.5v11M8 .5v11M.5 4.500h11M.5 8h11" stroke={D} />
        </Svg>
        Sheet1
      </button>
    </aside>
  );
}

export default function App() {
  return (
    <div className="flex min-h-screen flex-col overflow-hidden bg-white [font-family:'Open_Sans','Noto_Sans',sans-serif]">
      <TitleBar />
      <TabBar />
      <Ribbon />
      <div className="flex border-b border-[#dddbd9]">
        <div className="flex w-[13px] shrink-0 flex-col border-r border-[#d2d0ce] bg-[#f3f2f1] pt-[91px]">
          <Svg w={2} h={18}>
            <path d="M0 0h1v8H0zM0 10h1v8H0z" fill="#444" />
          </Svg>
          <Svg w={2} h={2} className="mt-[77px]">
            <path d="M0 0h2v1H0z" fill="#777" />
          </Svg>
        </div>
        <div className="flex min-w-0 flex-1 flex-col">
          <div className="flex flex-1 overflow-hidden bg-[#fdfdfd] pr-[13px] pl-3">
            <main className="min-w-0 flex-1 bg-white pt-[10px] pb-3.5 shadow-[0_0_8px_rgba(0,0,0,0.25)]">
              <Report />
            </main>
          </div>
          <PageTabs />
        </div>
        <FiltersPane />
        <VisualizationsPane />
        <DataPane />
      </div>
    </div>
  );
}
